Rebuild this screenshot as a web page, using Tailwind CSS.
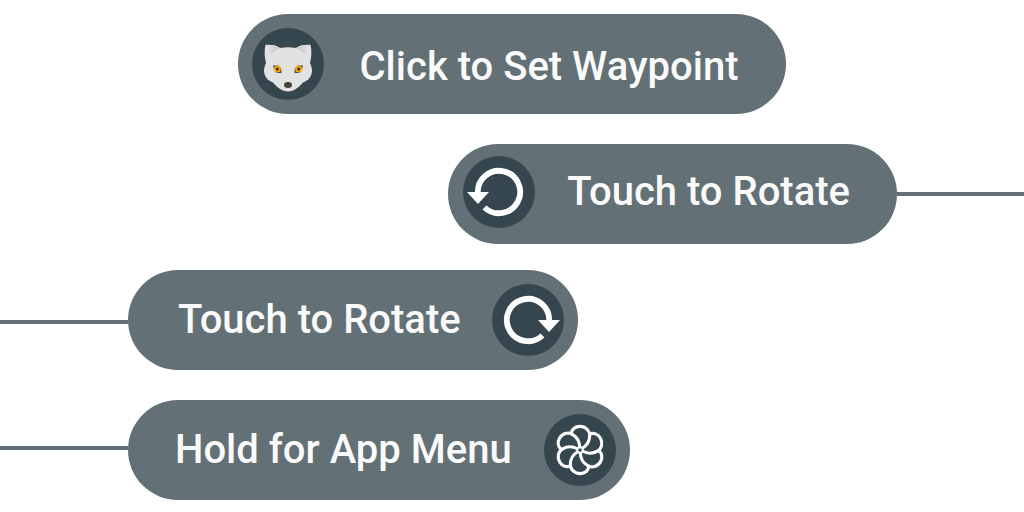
<!DOCTYPE html>
<html lang="en">
<head>
<meta charset="utf-8">
<title>Control hints</title>
<script src="https://cdn.jsdelivr.net/npm/@tailwindcss/browser@4"></script>
</head>
<body class="bg-white font-['Roboto',sans-serif] text-[40px] leading-[48px] font-medium text-[#fafafa]">
<main class="flex flex-col overflow-hidden py-3.5">
  <div class="flex justify-center">
    <button type="button" class="flex h-[100px] items-center rounded-full bg-[#637076] pr-12 pl-3.5">
      <svg class="size-[72px] shrink-0 rounded-full bg-[#36464e]" viewBox="0 0 72 72" aria-hidden="true">
        <defs>
          <radialGradient id="ear-left" gradientUnits="userSpaceOnUse" cx="25" cy="21" r="10"><stop offset="0" stop-color="#c8c8c8"/><stop offset="1" stop-color="#e2e2e2"/></radialGradient>
          <radialGradient id="ear-right" gradientUnits="userSpaceOnUse" cx="47" cy="21" r="10"><stop offset="0" stop-color="#c8c8c8"/><stop offset="1" stop-color="#e2e2e2"/></radialGradient>
        </defs>
        <path fill="#e2e2e2" d="M13.500 16.800Q23 16 28 20Q36 18.500 44 20Q49 16 58.500 16.800Q60.500 26 58 35C60 39 60.500 43 59.500 46C58.500 50 55.500 53 51 54.500C46 60 42 63.500 36 63.500C30 63.500 26 60 21 54.500C16.500 53 13.500 50 12.500 46C11.500 43 12 39 14 35Q11.500 26 13.500 16.800Z"/>
        <path fill="url(#ear-left)" d="M14 17.200Q23 16 28 20Q22 22 17 31Q12.500 26 14 17.200Z"/>
        <path fill="url(#ear-right)" d="M58 17.200Q49 16 44 20Q50 22 55 31Q59.500 26 58 17.200Z"/>
        <path fill="#424242" d="M21 37.500H26Q29.500 38.500 29.500 45H25Q22 43 21 37.500ZM51 37.500H46Q42.500 38.500 42.500 45H47Q50 43 51 37.500Z"/>
        <g fill="#424242" stroke="#f9a80c" stroke-width="1.800"><circle cx="25.300" cy="41" r="2.600"/><circle cx="46.700" cy="41" r="2.600"/></g>
        <ellipse cx="36" cy="57" rx="4" ry="3" fill="#424242"/>
      </svg>
      <span class="ml-9 pt-1.5 whitespace-nowrap">Click to Set Waypoint</span>
    </button>
  </div>
  <div class="mt-[30px] flex items-center">
    <button type="button" class="ml-auto flex h-[100px] items-center rounded-full bg-[#637076] pr-[47px] pb-1 pl-[15px]">
      <svg class="size-[72px] shrink-0 rounded-full bg-[#36464e]" viewBox="0 0 72 72" aria-hidden="true">
        <path d="M14.800 37A21.200 21.200 0 1 1 21.500 51.500" fill="none" stroke="#fff" stroke-width="5.800"/>
        <path d="M4 36H26L15 48Z" fill="#fff"/>
      </svg>
      <span class="ml-8 whitespace-nowrap">Touch to Rotate</span>
    </button>
    <span class="h-1 w-[127px] bg-[#637076]"></span>
  </div>
  <div class="mt-[26px] flex items-center">
    <span class="mt-1 h-1 w-32 bg-[#637076]"></span>
    <button type="button" class="flex h-[100px] items-center rounded-full bg-[#637076] pr-3.5 pl-[50px]">
      <span class="mr-[31px] whitespace-nowrap">Touch to Rotate</span>
      <svg class="size-[72px] shrink-0 rounded-full bg-[#36464e]" viewBox="0 0 72 72" aria-hidden="true">
        <path d="M57.200 37A21.200 21.200 0 1 0 50.500 51.500" fill="none" stroke="#fff" stroke-width="5.800"/>
        <path d="M68 36H46L57 48Z" fill="#fff"/>
      </svg>
    </button>
  </div>
  <div class="mt-[30px] flex items-center">
    <span class="mb-1 h-1 w-32 bg-[#637076]"></span>
    <button type="button" class="flex h-[100px] items-center rounded-full bg-[#637076] pr-3.5 pl-[47px]">
      <span class="mr-8 whitespace-nowrap">Hold for App Menu</span>
      <svg class="size-[72px] shrink-0 rounded-full bg-[#36464e]" viewBox="0 0 72 72" aria-hidden="true">
        <defs><path id="petal" d="M27.200 19.600C27.500 15.500 31 12.400 35.800 12.400C41.500 12.400 45.700 16.500 45.700 21.500C45.700 27 43 31.500 38 34.500"/></defs>
        <g fill="none" stroke="#fff" stroke-width="3.100">
          <circle cx="36" cy="36" r="2.800" stroke-width="2"/>
          <use href="#petal"/><use href="#petal" transform="rotate(60 36 36)"/><use href="#petal" transform="rotate(120 36 36)"/><use href="#petal" transform="rotate(180 36 36)"/><use href="#petal" transform="rotate(240 36 36)"/><use href="#petal" transform="rotate(300 36 36)"/>
        </g>
      </svg>
    </button>
  </div>
</main>
</body>
</html>
